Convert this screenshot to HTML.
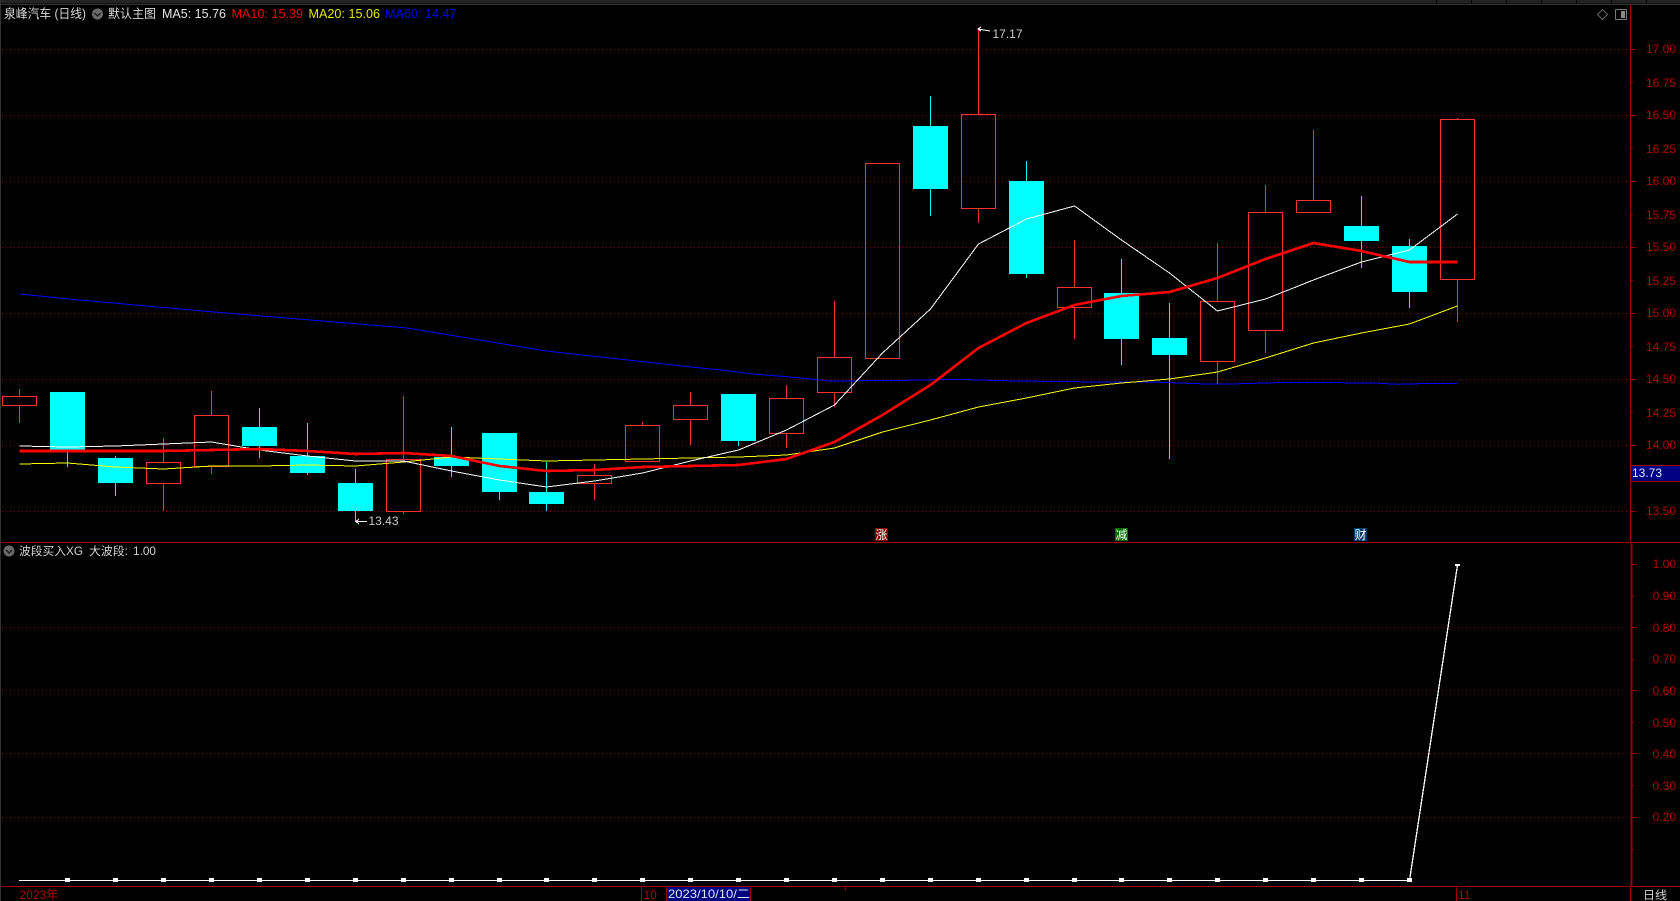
<!DOCTYPE html>
<html lang="zh">
<head>
<meta charset="utf-8">
<title>泉峰汽车 日线</title>
<style>
html,body{margin:0;padding:0;background:#000;width:1680px;height:901px;overflow:hidden}
svg{display:block}
text{font-family:"Liberation Sans","Noto Sans CJK SC",sans-serif;font-size:12px}
.ax{fill:#b30000}
.cj{font-size:11.5px}
.hd{font-size:12.5px}
</style>
</head>
<body>
<svg width="1680" height="901" viewBox="0 0 1680 901" xmlns="http://www.w3.org/2000/svg">
<rect width="1680" height="901" fill="#000"/>
<!-- top strip -->
<g shape-rendering="crispEdges">
<rect x="0" y="0" width="1680" height="3" fill="#242424"/>
<rect x="0" y="3" width="1680" height="1" fill="#111"/>
<rect x="0" y="4" width="1680" height="1" fill="#333"/>
<rect x="0" y="0" width="1" height="901" fill="#333"/>
<path d="M1436.5 0V3M1471.5 0V3M1506.5 0V3M1541.5 0V3M1576.5 0V3M1611.5 0V3M1646.5 0V3" stroke="#000" fill="none"/>
<!-- dotted grid -->
<path d="M2 49.5H1630M2 115.5H1630M2 181.5H1630M2 247.5H1630M2 313.5H1630M2 379.5H1630M2 445.5H1630M2 511.5H1630M2 627.5H1630M2 690.5H1630M2 753.5H1630M2 817.5H1630" stroke="#800000" stroke-dasharray="1 3" fill="none"/>
<!-- axes -->
<path d="M1630.5 5V542" stroke="#990000" fill="none"/>
<path d="M1631.5 543V886" stroke="#990000" stroke-width="2" fill="none"/>
<path d="M1 542.5H1680M1 886.5H1680M1630.5 886V901" stroke="#990000" fill="none"/>
<path d="M1630 49.5h6M1630 82.5h3M1630 115.5h6M1630 148.5h3M1630 181.5h6M1630 214.5h3M1630 247.5h6M1630 280.5h3M1630 313.5h6M1630 346.5h3M1630 379.5h6M1630 412.5h3M1630 445.5h6M1630 511.5h6" stroke="#990000" fill="none"/>
<path d="M1632 564.5h5M1632 596.5h2M1632 627.5h5M1632 659.5h2M1632 690.5h5M1632 722.5h2M1632 753.5h5M1632 785.5h2M1632 817.5h5M1632 849.5h2" stroke="#990000" fill="none"/>
<path d="M641.5 887V901M1456.5 887V901M845.5 887V890" stroke="#990000" fill="none"/>
</g>

<!-- red candle wicks -->
<g shape-rendering="crispEdges" fill="none" stroke="#ff3232">
<path d="M19.5 389V396M19.5 405V423M163.5 438V462M163.5 483V511M211.5 391V415M211.5 466V474M403.5 396V459M403.5 511V514M594.5 464V475M594.5 483V500M642.5 422V425M690.5 392V405M690.5 419V445M786.5 385V398M786.5 433V448M834.5 301V357M834.5 392V407M978.5 29V114M978.5 208V223M1074.5 240V287M1074.5 307V339M1217.5 243V301M1217.5 361V384M1265.5 185V212M1265.5 330V353M1313.5 130V200M1457.5 118V119M1457.5 279V322"/>
<rect x="2.5" y="396.5" width="34" height="9"/>
<rect x="146.5" y="462.5" width="34" height="21"/>
<rect x="194.5" y="415.5" width="34" height="51"/>
<rect x="386.5" y="459.5" width="34" height="52"/>
<rect x="577.5" y="475.5" width="34" height="8"/>
<rect x="625.5" y="425.5" width="34" height="36"/>
<rect x="673.5" y="405.5" width="34" height="14"/>
<rect x="769.5" y="398.5" width="34" height="35"/>
<rect x="817.5" y="357.5" width="34" height="35"/>
<rect x="865.5" y="163.5" width="34" height="195"/>
<rect x="961.5" y="114.5" width="34" height="94"/>
<rect x="1057.5" y="287.5" width="34" height="20"/>
<rect x="1200.5" y="301.5" width="34" height="60"/>
<rect x="1248.5" y="212.5" width="34" height="118"/>
<rect x="1296.5" y="200.5" width="34" height="12"/>
<rect x="1440.5" y="119.5" width="34" height="160"/>
</g>

<!-- cyan candles -->
<g shape-rendering="crispEdges">
<path fill="none" stroke="#00ffff" d="M67.5 450V467M115.5 456V458M115.5 483V496M259.5 408V427M259.5 446V458M307.5 423V456M307.5 473V475M355.5 469V483M355.5 511V522M451.5 427V457M451.5 466V477M499.5 492V500M546.5 462V492M546.5 504V511M738.5 441V446M930.5 96V126M930.5 189V216M1026.5 161V181M1026.5 274V278M1121.5 259V293M1121.5 339V365M1169.5 303V338M1169.5 355V459M1361.5 196V226M1361.5 241V268M1409.5 239V246M1409.5 292V308"/>
<g fill="#00ffff">
<rect x="50" y="392" width="35" height="58"/>
<rect x="98" y="458" width="35" height="25"/>
<rect x="242" y="427" width="35" height="19"/>
<rect x="290" y="456" width="35" height="17"/>
<rect x="338" y="483" width="35" height="28"/>
<rect x="434" y="457" width="35" height="9"/>
<rect x="482" y="433" width="35" height="59"/>
<rect x="529" y="492" width="35" height="12"/>
<rect x="721" y="394" width="35" height="47"/>
<rect x="913" y="126" width="35" height="63"/>
<rect x="1009" y="181" width="35" height="93"/>
<rect x="1104" y="293" width="35" height="46"/>
<rect x="1152" y="338" width="35" height="17"/>
<rect x="1344" y="226" width="35" height="15"/>
<rect x="1392" y="246" width="35" height="46"/>
</g>
</g>

<!-- moving averages -->
<g fill="none" shape-rendering="crispEdges" stroke-linejoin="round">
<polyline stroke="#0000ff" stroke-width="1" points="19.5,294 76,299.7 214,312 407,328 546,351 696,367.5 721,370 753,374 787,376.7 830,381 907,380.3 953,379.3 1017,381 1100,382 1153,382 1206,384 1230,384 1290,382.3 1373,383 1398,384.3 1433,383.3 1457,383.3"/>
<polyline stroke="#ffff00" stroke-width="1" points="19.5,464 67.5,463 115.5,467 163.5,469 211.5,466 259.5,466 307.5,465 355.5,466 403.5,462 451.5,457 499.5,459 546.5,461 594.5,460 642.5,459 690.5,458 738.5,457 786.5,455 834.5,448 882.5,432 930.5,420 978.5,407 1026.5,398 1074.5,388 1121.5,383 1169.5,379 1217.5,372 1265.5,358 1313.5,343 1361.5,333 1409.5,324 1457.5,306"/>
<polyline stroke="#ffffff" stroke-width="1" points="19.5,446 67.5,447 115.5,446 163.5,444 211.5,442 259.5,450 307.5,456 355.5,461 403.5,461 451.5,471 499.5,480 546.5,487 594.5,481 642.5,473 690.5,461 738.5,450 786.5,430 834.5,405 882.5,353 930.5,309 978.5,244 1026.5,219 1074.5,206 1121.5,240 1169.5,273 1217.5,311 1265.5,299 1313.5,280 1361.5,262 1409.5,250 1457.5,214"/>
<polyline stroke="#ff0000" stroke-width="2.6" points="19.5,451 67.5,451 115.5,451 163.5,451 211.5,450 259.5,449 307.5,451 355.5,454 403.5,453 451.5,456 499.5,466 546.5,471 594.5,470 642.5,467 690.5,466 738.5,465 786.5,459 834.5,442 882.5,415 930.5,385 978.5,348 1026.5,323 1074.5,305 1121.5,296 1169.5,292 1217.5,278 1265.5,259 1313.5,243 1361.5,251 1409.5,262 1457.5,262"/>
</g>

<!-- price annotations -->
<g fill="none" stroke="#ffffff" shape-rendering="crispEdges">
<path d="M978 29L990 31M981 27L978 29L981 31"/>
<path d="M356 521.5H367M359 519L356 521.5L359 524"/>
</g>
<text x="992.5" y="38" fill="#cccccc">17.17</text>
<text x="368.5" y="525" fill="#cccccc">13.43</text>

<!-- event markers -->
<g shape-rendering="crispEdges">
<rect x="875" y="528" width="13" height="13" fill="#800000"/>
<rect x="1115" y="528" width="13" height="13" fill="#006a00"/>
<rect x="1354" y="528" width="13" height="13" fill="#003a6e"/>
</g>
<text x="875.5" y="539" fill="#fff" style="font-size:12px">涨</text>
<text x="1115.5" y="539" fill="#fff" style="font-size:12px">减</text>
<text x="1354.5" y="539" fill="#fff" style="font-size:12px">财</text>

<!-- lower indicator -->
<g shape-rendering="crispEdges">
<polyline fill="none" stroke="#fff" stroke-width="1.3" points="19,880.5 1409.5,880.5 1457.5,565"/>
<path fill="#fff" d="M65 878h5v4h-5zM113 878h5v4h-5zM161 878h5v4h-5zM209 878h5v4h-5zM257 878h5v4h-5zM305 878h5v4h-5zM353 878h5v4h-5zM401 878h5v4h-5zM449 878h5v4h-5zM497 878h5v4h-5zM544 878h5v4h-5zM592 878h5v4h-5zM640 878h5v4h-5zM688 878h5v4h-5zM736 878h5v4h-5zM784 878h5v4h-5zM832 878h5v4h-5zM880 878h5v4h-5zM928 878h5v4h-5zM976 878h5v4h-5zM1024 878h5v4h-5zM1072 878h5v4h-5zM1119 878h5v4h-5zM1167 878h5v4h-5zM1215 878h5v4h-5zM1263 878h5v4h-5zM1311 878h5v4h-5zM1359 878h5v4h-5zM1407 878h5v4h-5zM1455 564h5v2h-5z"/>
</g>

<!-- header -->
<text class="hd" x="4" y="18" fill="#d8d8d8" textLength="82" lengthAdjust="spacingAndGlyphs">泉峰汽车 (日线)</text>
<circle cx="97.5" cy="14" r="5.5" fill="#6a6a6a"/>
<path d="M94.5 13L97.5 16L100.5 13" fill="none" stroke="#1a1a1a" stroke-width="1.3"/>
<text class="hd" x="108" y="18" fill="#d8d8d8" textLength="48" lengthAdjust="spacingAndGlyphs">默认主图</text>
<text class="hd" x="162" y="18" fill="#e6e6e6" textLength="64" lengthAdjust="spacingAndGlyphs">MA5: 15.76</text>
<text class="hd" x="231.5" y="18" fill="#e60000" textLength="71.5" lengthAdjust="spacingAndGlyphs">MA10: 15.39</text>
<text class="hd" x="308.5" y="18" fill="#e6e600" textLength="71.5" lengthAdjust="spacingAndGlyphs">MA20: 15.06</text>
<text class="hd" x="385" y="18" fill="#0000e6" textLength="71.5" lengthAdjust="spacingAndGlyphs">MA60: 14.47</text>

<!-- top right icons -->
<path d="M1602.5 9.5L1607.5 14.5L1602.5 19.5L1597.5 14.5Z" fill="none" stroke="#666"/>
<g shape-rendering="crispEdges">
<rect x="1615.5" y="9.5" width="11" height="10" rx="1" fill="none" stroke="#777"/>
<rect x="1621" y="11" width="4" height="7" fill="#888"/>
</g>

<!-- lower panel title -->
<circle cx="9" cy="551" r="5.5" fill="#6a6a6a"/>
<path d="M6 550L9 553L12 550" fill="none" stroke="#1a1a1a" stroke-width="1.3"/>
<text class="cj" x="19" y="555" fill="#d0d0d0" textLength="47" lengthAdjust="spacingAndGlyphs">波段买入</text>
<text x="66" y="555" fill="#d0d0d0" textLength="17" lengthAdjust="spacingAndGlyphs">XG</text>
<text class="cj" x="89" y="555" fill="#d0d0d0" textLength="39" lengthAdjust="spacingAndGlyphs">大波段:</text>
<text x="133" y="555" fill="#d0d0d0" textLength="23" lengthAdjust="spacingAndGlyphs">1.00</text>

<!-- price axis labels -->
<g class="ax" text-anchor="end">
<text class="ax" x="1676" y="53">17.00</text>
<text class="ax" x="1676" y="87">16.75</text>
<text class="ax" x="1676" y="119">16.50</text>
<text class="ax" x="1676" y="153">16.25</text>
<text class="ax" x="1676" y="185">16.00</text>
<text class="ax" x="1676" y="219">15.75</text>
<text class="ax" x="1676" y="251">15.50</text>
<text class="ax" x="1676" y="285">15.25</text>
<text class="ax" x="1676" y="317">15.00</text>
<text class="ax" x="1676" y="351">14.75</text>
<text class="ax" x="1676" y="383">14.50</text>
<text class="ax" x="1676" y="417">14.25</text>
<text class="ax" x="1676" y="449">14.00</text>
<text class="ax" x="1676" y="515">13.50</text>
<text class="ax" x="1676" y="568">1.00</text>
<text class="ax" x="1676" y="600">0.90</text>
<text class="ax" x="1676" y="632">0.80</text>
<text class="ax" x="1676" y="663">0.70</text>
<text class="ax" x="1676" y="695">0.60</text>
<text class="ax" x="1676" y="727">0.50</text>
<text class="ax" x="1676" y="758">0.40</text>
<text class="ax" x="1676" y="790">0.30</text>
<text class="ax" x="1676" y="821">0.20</text>
</g>

<!-- current price box -->
<g shape-rendering="crispEdges">
<rect x="1631" y="465" width="49" height="17" fill="#000080"/>
<path d="M1631 465.5H1680M1631 481.5H1680" stroke="#990000" fill="none"/>
</g>
<text x="1632" y="477" fill="#dfe6ff">13.73</text>

<!-- time axis -->
<text class="ax" x="19.5" y="899">2023年</text>
<text class="ax" x="643.5" y="899">10</text>
<g shape-rendering="crispEdges">
<rect x="667" y="887" width="84" height="14" fill="#000080"/>
<path d="M666.5 887V901M750.5 887V901" stroke="#990000" fill="none"/>
</g>
<text x="668" y="898" fill="#dfe6ff" textLength="82" lengthAdjust="spacingAndGlyphs">2023/10/10/二</text>
<text class="ax" x="1458" y="899">11</text>
<text class="cj" x="1643" y="899" fill="#d0d0d0" textLength="24" lengthAdjust="spacingAndGlyphs">日线</text>
</svg>
</body>
</html>
